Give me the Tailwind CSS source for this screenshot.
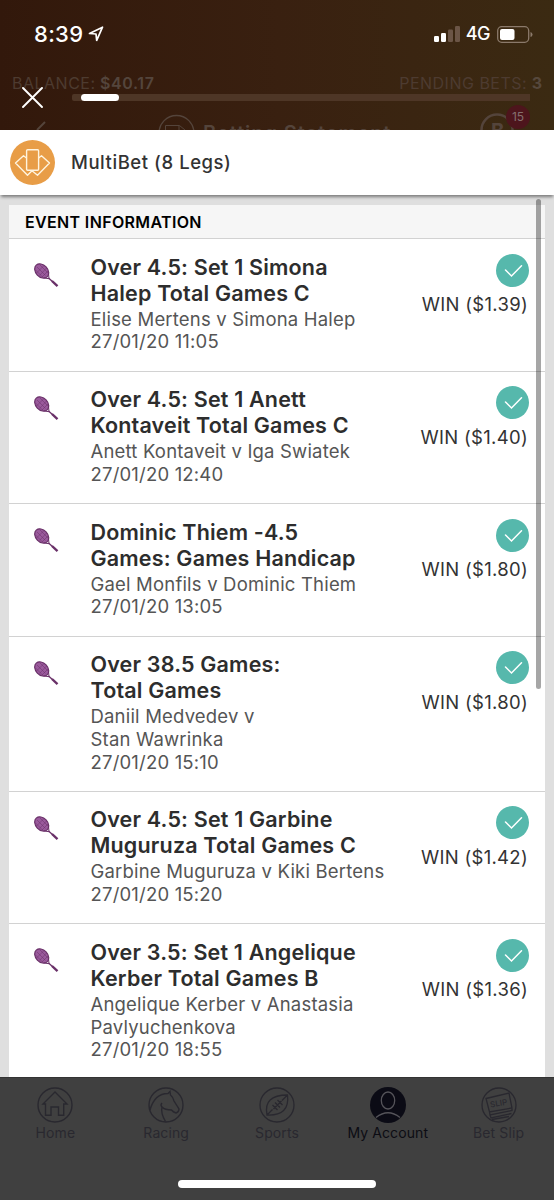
<!DOCTYPE html>
<html lang="en">
<head>
<meta charset="utf-8">
<meta name="viewport" content="width=device-width">
<title>MultiBet</title>
<script src="https://cdn.jsdelivr.net/npm/@tailwindcss/browser@4"></script>
</head>
<body class="bg-[#404040] font-['Inter','Liberation_Sans',sans-serif]">
<div class="flex h-[1200px] w-[554px] flex-col overflow-hidden">
  <header class="relative h-[130px] shrink-0 overflow-hidden bg-linear-to-r from-[#32180b] via-[#392010] to-[#3b2a12]">
    <!-- dimmed page header below the overlay -->
    <div class="absolute inset-x-3 top-[73px] flex justify-between text-[16px] leading-5 text-[#4d3b30]">
      <div><span class="tracking-[0.5px]">BALANCE:</span> <span class="font-semibold tracking-[0.6px] text-[#54453c]">$40.17</span></div>
      <div><span class="tracking-[0.5px]">PENDING BETS:</span> <span class="font-bold text-[#56483c]">3</span></div>
    </div>
    <svg class="absolute inset-0" width="554" height="130" fill="none" stroke="#54443b">
      <path d="M45 122L37 130" stroke-width="2"/>
      <circle cx="176.500" cy="133" r="17.500" stroke-width="1.300"/>
      <path d="M165.500 130v-4.500h14l5.500 4.500M179 126v4"/>
      <circle cx="497" cy="130" r="15.500" stroke-width="2.500"/>
    </svg>
    <div class="absolute left-[203px] top-[121px] text-[20px] font-semibold leading-6 tracking-[0.9px] text-[#54443b]">Betting Statement</div>
    <div class="absolute left-[491px] top-[119px] text-[20px] font-bold leading-6 text-[#54443b]">B</div>
    <div class="absolute left-[506px] top-[105px] flex size-6 items-center justify-center rounded-full bg-[#4d151c] text-[12px] text-[#85706e]">15</div>
    <div class="relative flex h-[68px] items-center justify-between pl-[34px] pr-[21px] text-white">
      <div class="flex items-center gap-[5px]">
        <span class="text-[22px] font-medium leading-6 tracking-[0.3px]">8:39</span>
        <svg width="16" height="16" viewBox="0 0 16 16" fill="none" stroke="currentColor" stroke-width="1.700" stroke-linejoin="round"><path d="M1.500 7.500L14.500 1.200 8.700 14.300 8 8Z"/></svg>
      </div>
      <div class="flex items-center">
        <svg width="26" height="16" viewBox="0 0 26 16" fill="currentColor"><rect x="0" y="10" width="5" height="6" rx="1.200"/><rect x="7" y="7" width="5" height="9" rx="1.200"/><g fill="#6b5546"><rect x="14" y="3.500" width="5" height="12.500" rx="1.200"/><rect x="21" y="0" width="5" height="16" rx="1.200"/></g></svg>
        <span class="ml-[6px] text-[18px] font-medium leading-5 -tracking-[0.5px]">4G</span>
        <svg class="ml-[7px]" width="36" height="17" viewBox="0 0 36 17"><rect x=".7" y=".7" width="31" height="15.600" rx="4" fill="none" stroke="#8b7a6b" stroke-width="1.300"/><rect x="3" y="3" width="14.500" height="11" rx="2" fill="#fff"/><path d="M33.500 6q2 .5 2 2.500t-2 2.500Z" fill="#8b7a6b"/></svg>
      </div>
    </div>
    <div class="relative flex items-center gap-[29px] pl-[22px] pt-[19px]">
      <svg width="21" height="21" viewBox="0 0 21 21" stroke="#fff" stroke-width="1.900" stroke-linecap="round"><path d="M1 1L20 20M20 1L1 20"/></svg>
      <div class="h-[7px] w-[458px] rounded-l-[2px] bg-[#4e3626] pl-[9px]"><div class="h-[7px] w-[38px] rounded-full bg-white"></div></div>
    </div>
  </header>

  <div class="relative z-10 flex h-[65px] shrink-0 items-center bg-white pl-[10px] shadow-[0_3px_3px_-1px_rgba(0,0,0,0.45)]">
    <svg width="45" height="45" viewBox="0 0 45 45" fill="none" stroke="#fff4df" stroke-width="1.400" stroke-linejoin="round"><circle cx="22.500" cy="22.500" r="22.500" fill="#e89d47" stroke="none"/><rect x="16.600" y="9.800" width="12" height="20.500" rx="1"/><path d="M16.500 18L13.500 15.800 5.500 23 17.500 35.300 22 30.800 27.500 35.300 39.500 23 31.500 15.800 28.600 18"/></svg>
    <h1 class="ml-4 text-[18.500px] font-medium tracking-[0.550px] text-[#333]">MultiBet (8 Legs)</h1>
  </div>

  <main class="relative min-h-0 flex-1 overflow-hidden bg-[#dfdfdf] pl-[9px] pr-[9px] pt-[10px]">
    <section class="bg-white">
      <h2 class="flex h-[34px] items-center border-b border-[#d2d2d2] bg-[#f6f6f6] pl-4 text-[16px] font-semibold tracking-[0.350px] text-black"><span>EVENT INFORMATION</span></h2>
      <div id="legs"></div>
    </section>
    <div class="absolute left-[536px] top-[4px] h-[490px] w-[5px] rounded-full bg-black/35"></div>
  </main>

  <nav class="flex h-[123px] shrink-0 flex-col border-t border-[#333] bg-[#404040]">
    <div class="grid grid-cols-5 pt-[9px] text-center text-[14px] leading-[17px] tracking-[0.1px] text-[#29282f]">
      <div class="flex flex-col items-center gap-px">
        <svg width="36" height="36" viewBox="0 0 36 36" fill="none" stroke="#29282f" stroke-width="1.400"><circle cx="18" cy="18" r="17"/><path d="M6 17L18 5 30 17H26.700V28.300H21.500V20H14V28.300H8.500V17Z"/></svg>
        <span>Home</span>
      </div>
      <div class="flex flex-col items-center gap-px">
        <svg width="36" height="36" viewBox="0 0 36 36" fill="none" stroke="#29282f" stroke-width="1.400"><circle cx="18" cy="18" r="17"/><path d="M2 23C5 12 11 6.500 20 6.500L22 4.500 22.500 8Q25 10 26 14L31 22Q31 25 28 26Q25 25 23.500 23Q17 23 14 20Q12 18 14 16M14 20Q12.500 26 17.500 34.500"/></svg>
        <span>Racing</span>
      </div>
      <div class="flex flex-col items-center gap-px">
        <svg width="36" height="36" viewBox="0 0 36 36" fill="none" stroke="#29282f" stroke-width="1.300"><circle cx="18" cy="18" r="17"/><path d="M8 28Q4 8 28.500 8Q31 29 8 28ZM8 28L13.500 22.500M23 13.500L28.500 8M13.500 18L18.500 23M16 15.500L21 20.500M18.500 13L23.500 18M14.500 22L22.500 14"/></svg>
        <span>Sports</span>
      </div>
      <div class="flex flex-col items-center gap-px text-[#0c0c13]">
        <svg width="36" height="36" viewBox="0 0 36 36" fill="none" stroke="#55545a" stroke-width="1.300"><circle cx="18" cy="18" r="18" fill="#0b0b15" stroke="none"/><ellipse cx="18" cy="13.500" rx="6.700" ry="8.500"/><path d="M6 30.500Q18 21 30 30.500"/></svg>
        <span class="whitespace-nowrap">My Account</span>
      </div>
      <div class="flex flex-col items-center gap-px">
        <svg width="36" height="36" viewBox="0 0 36 36" fill="none" stroke="#29282f" stroke-width="1.300"><circle cx="18" cy="18" r="17"/><path d="M5 11.500L28 6 31 21 8.500 25ZM8.500 25L9 28 31 23.500V21M9 28L10 31 30.500 26.500M11 32.500L28 29.500"/><text x="9.500" y="20.500" transform="rotate(-9 9 20)" font-family="Inter" font-size="8" font-weight="500" fill="#29282f" stroke="none">SLIP</text></svg>
        <span>Bet Slip</span>
      </div>
    </div>
    <div class="mx-auto mt-[39px] h-2 w-[198px] rounded-full bg-white"></div>
  </nav>
</div>

<template id="leg">
  <article class="flex border-b border-[#d2d2d2] pb-[17.500px] pt-[14.500px]">
    <svg class="ml-[25px] mt-[9.500px] shrink-0" width="25" height="26" viewBox="0 0 25 26" fill="none" stroke="#693068">
      <ellipse cx="7.700" cy="8" rx="6" ry="8" transform="rotate(-43 7.700 8)" fill="#9a5a9c" stroke-width="1.200"/>
      <path d="M3 4L11.500 12.500M6 2L14 10M1.500 7L9 14.500M10 2.500L2.500 10M12.500 5L5.500 12.500M14 8L8 14" stroke-width=".5"/>
      <path d="M10 15L15 15.700 14.500 10.500" stroke-width="1"/><path d="M14.500 15L19 19" stroke-width="1.400"/><path d="M18 18L23.500 23.200" stroke-width="2.400"/>
    </svg>
    <div class="ml-[31.500px] w-[310px] shrink-0 whitespace-nowrap">
      <h3 class="text-[21.500px] font-semibold leading-[26px] tracking-[0.180px] text-[#2d2d2d]"></h3>
      <p class="mt-[2px] text-[18.500px] leading-[22.750px] tracking-[0.190px] text-[#555]"></p>
    </div>
    <div class="flex flex-1 flex-col items-end">
      <svg class="mr-[16px]" width="33" height="33" viewBox="0 0 33 33" fill="none"><circle cx="16.500" cy="16.500" r="16.500" fill="#56b8ac"/><path d="M9.500 16L15.500 22 25.500 11.800" stroke="#fff" stroke-width="1.500" stroke-linecap="round"/></svg>
      <div class="mr-[17px] mt-[6.500px] whitespace-nowrap text-[18.500px] leading-[22px] tracking-[0.300px] text-[#333]"></div>
    </div>
  </article>
</template>
<script>
const legs = [
  [["Over 4.5: Set 1 Simona", "Halep Total Games C"], ["Elise Mertens v Simona Halep", "27/01/20 11:05"], "1.39"],
  [["Over 4.5: Set 1 Anett", "Kontaveit Total Games C"], ["Anett Kontaveit v Iga Swiatek", "27/01/20 12:40"], "1.40"],
  [["Dominic Thiem -4.5", "Games: Games Handicap"], ["Gael Monfils v Dominic Thiem", "27/01/20 13:05"], "1.80"],
  [["Over 38.5 Games:", "Total Games"], ["Daniil Medvedev v", "Stan Wawrinka", "27/01/20 15:10"], "1.80"],
  [["Over 4.5: Set 1 Garbine", "Muguruza Total Games C"], ["Garbine Muguruza v Kiki Bertens", "27/01/20 15:20"], "1.42"],
  [["Over 3.5: Set 1 Angelique", "Kerber Total Games B"], ["Angelique Kerber v Anastasia", "Pavlyuchenkova", "27/01/20 18:55"], "1.36"]
];
for (const [title, info, price] of legs) {
  const row = document.getElementById("leg").content.cloneNode(true);
  row.querySelector("h3").innerHTML = title.join("<br>");
  row.querySelector("p").innerHTML = info.join("<br>");
  row.querySelector("article > div:last-child > div").textContent = `WIN ($${price})`;
  document.getElementById("legs").append(row);
}
</script>
</body>
</html>
